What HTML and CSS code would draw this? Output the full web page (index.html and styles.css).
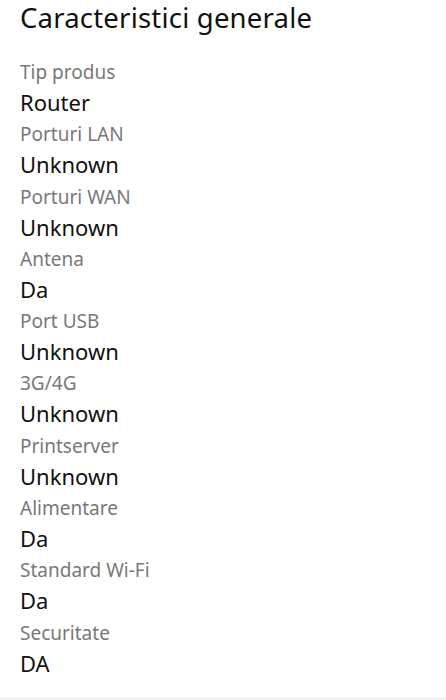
FILE: index.html
```html
<!DOCTYPE html>
<html lang="en">
<head>
    <meta charset="UTF-8">
    <meta name="viewport" content="width=device-width, initial-scale=1.0">
    <title>Caracteristici generale</title>
    <link rel="stylesheet" href="styles.css">
</head>
<body>
    <div class="section">
        <h1>Caracteristici generale</h1>

        <div class="specs">
            <div class="spec">
                <div class="label">Tip produs</div>
                <div class="value">Router</div>
            </div>
            <div class="spec">
                <div class="label">Porturi LAN</div>
                <div class="value">Unknown</div>
            </div>
            <div class="spec">
                <div class="label">Porturi WAN</div>
                <div class="value">Unknown</div>
            </div>
            <div class="spec">
                <div class="label">Antena</div>
                <div class="value">Da</div>
            </div>
            <div class="spec">
                <div class="label">Port USB</div>
                <div class="value">Unknown</div>
            </div>
            <div class="spec">
                <div class="label">3G/4G</div>
                <div class="value">Unknown</div>
            </div>
            <div class="spec">
                <div class="label">Printserver</div>
                <div class="value">Unknown</div>
            </div>
            <div class="spec">
                <div class="label">Alimentare</div>
                <div class="value">Da</div>
            </div>
            <div class="spec">
                <div class="label">Standard Wi-Fi</div>
                <div class="value">Da</div>
            </div>
            <div class="spec">
                <div class="label">Securitate</div>
                <div class="value">DA</div>
            </div>
        </div>
    </div>
    <div class="divider"></div>
</body>
</html>
```

FILE: styles.css
```css
body {
    font-family: "Noto Sans", Roboto, sans-serif;
    background-color: #f2f2f2;
    margin: 0;
    padding: 0;
}
.section {
    background-color: #fff;
    padding: 0 20px;
    height: 697px;
    box-sizing: border-box;
}
h1 {
    margin: 0;
    padding-top: 0;
    font-size: 27.5px;
    font-weight: 400;
    line-height: 36px;
    letter-spacing: 0.2px;
    color: #111;
}
.specs {
    padding-top: 22px;
}
.spec {
    height: 62.3px;
}
.label {
    font-size: 19px;
    line-height: 28px;
    color: #787878;
}
.value {
    font-size: 22px;
    line-height: 32px;
    color: #111;
}
.divider {
    height: 3px;
}
```
